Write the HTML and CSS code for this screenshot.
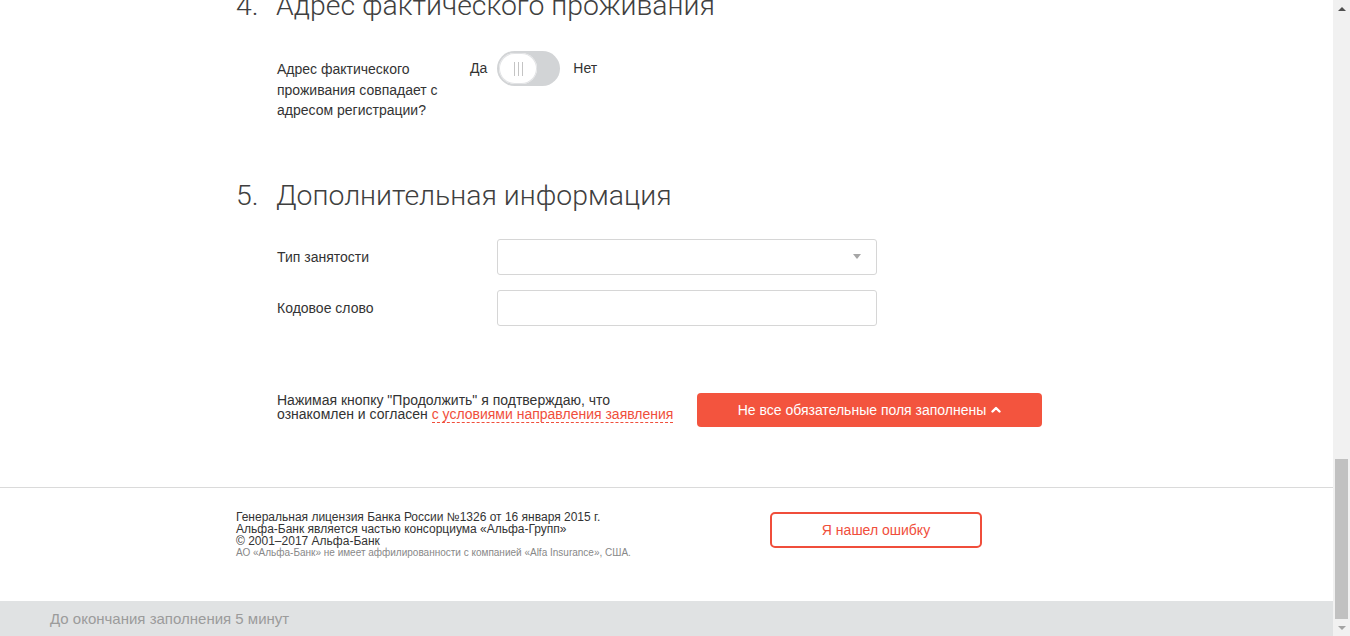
FILE: index.html
```html
<!DOCTYPE html>
<html lang="ru">
<head>
<meta charset="utf-8">
<title>Анкета</title>
<link rel="stylesheet" href="styles.css">
</head>
<body>
<div class="screen">
  <div class="main">
    <div class="page">
      <section class="section sec-address">
        <h2 class="sec-title"><span class="num">4.</span><span>Адрес фактического проживания</span></h2>
        <div class="row-toggle">
          <div class="label-multi">Адрес фактического проживания совпадает с адресом регистрации?</div>
          <div class="toggle-group">
            <span class="opt">Да</span>
            <span class="toggle"><span class="knob"><i></i><i></i><i></i></span></span>
            <span class="opt">Нет</span>
          </div>
        </div>
      </section>

      <section class="section sec-extra">
        <h2 class="sec-title"><span class="num">5.</span><span>Дополнительная информация</span></h2>
        <div class="fields">
          <div class="field-row">
            <div class="field-label">Тип занятости</div>
            <div class="field select"><span class="arrow"></span></div>
          </div>
          <div class="field-row">
            <div class="field-label">Кодовое слово</div>
            <div class="field"></div>
          </div>
        </div>
      </section>

      <div class="consent">
        <p class="consent-text">Нажимая кнопку "Продолжить" я подтверждаю, что ознакомлен и согласен <a class="dash-link">с условиями направления заявления</a></p>
        <button class="btn-primary">Не все обязательные поля заполнены
          <svg class="chev" width="10" height="7" viewBox="0 0 10 7"><polyline points="1.5,5.5 5,2 8.5,5.5" fill="none" stroke="#fff" stroke-width="2.4" stroke-linecap="round" stroke-linejoin="round"/></svg>
        </button>
      </div>
    </div>

    <footer class="footer">
      <div class="footer-inner">
        <div class="legal">
          <div>Генеральная лицензия Банка России №1326 от 16 января 2015 г.</div>
          <div>Альфа-Банк является частью консорциума «Альфа-Групп»</div>
          <div>© 2001–2017 Альфа-Банк</div>
          <div class="legal-small">АО «Альфа-Банк» не имеет аффилированности с компанией «Alfa Insurance», США.</div>
        </div>
        <button class="btn-outline">Я нашел ошибку</button>
      </div>
    </footer>

    <div class="timer-bar">До окончания заполнения 5 минут</div>
  </div>

  <div class="scrollbar">
    <div class="sb-btn"><span class="tri-up"></span></div>
    <div class="sb-track"><div class="sb-thumb"></div></div>
    <div class="sb-btn"><span class="tri-down"></span></div>
  </div>
</div>
</body>
</html>
```

FILE: styles.css
```css
html, body {
  margin: 0;
  padding: 0;
  height: 100%;
  overflow: hidden;
  background: #fff;
}

body {
  font-family: "Liberation Sans", Arial, sans-serif;
  color: #333;
  font-size: 14px;
}

.screen {
  display: flex;
  height: 636px;
  width: 1350px;
}

.main {
  flex: 1;
  display: flex;
  flex-direction: column;
  overflow: hidden;
  min-width: 0;
}

.page {
  padding-left: 236px;
}

.sec-address {
  margin-top: -12px;
}

.sec-extra {
  margin-top: 57px;
}

.sec-title {
  display: flex;
  margin: 0;
  font-family: Roboto, "Liberation Sans", sans-serif;
  font-weight: 300;
  font-size: 28.4px;
  line-height: 36px;
  color: #3f3f3f;
}

.sec-title .num {
  width: 40px;
  flex: none;
}

.row-toggle {
  display: flex;
  align-items: flex-start;
  margin-top: 27px;
  padding-left: 41px;
}

.label-multi {
  width: 193px;
  padding-top: 8px;
  line-height: 20.5px;
}

.toggle-group {
  display: flex;
  align-items: center;
  height: 35px;
}

.opt {
  line-height: 35px;
}

.toggle {
  width: 63px;
  height: 35px;
  border-radius: 18px;
  background: #d2d4d6;
  margin: 0 13px 0 10px;
  display: flex;
  align-items: center;
  padding-left: 2px;
  box-sizing: border-box;
}

.knob {
  width: 38px;
  height: 31px;
  border-radius: 16px;
  background: #fff;
  box-shadow: 0 0 0 1px #e2e3e5 inset;
  display: flex;
  align-items: center;
  justify-content: center;
  gap: 3px;
}

.knob i {
  display: block;
  width: 1px;
  height: 14px;
  background: #c4c4c4;
}

.fields {
  margin-top: 25px;
  padding-left: 41px;
  display: flex;
  flex-direction: column;
  gap: 15px;
}

.field-row {
  display: flex;
  align-items: center;
}

.field-label {
  width: 220px;
}

.field {
  width: 380px;
  height: 36px;
  box-sizing: border-box;
  border: 1px solid #d6d6d6;
  border-radius: 3px;
  background: #fff;
  display: flex;
  align-items: center;
  justify-content: flex-end;
  padding-right: 15px;
}

.arrow {
  width: 0;
  height: 0;
  border-left: 4px solid transparent;
  border-right: 4px solid transparent;
  border-top: 5px solid #a6a6a6;
}

.consent {
  display: flex;
  align-items: flex-start;
  margin-top: 67px;
  padding-left: 41px;
  gap: 20px;
}

.consent-text {
  width: 400px;
  margin: 0;
  line-height: 14px;
}

.dash-link {
  color: #f04e3b;
  border-bottom: 1px dashed #f04e3b;
  text-decoration: none;
}

.btn-primary {
  width: 345px;
  height: 34px;
  border: 0;
  border-radius: 4px;
  background: #f3543e;
  color: #fff;
  font-family: "Liberation Sans", Arial, sans-serif;
  font-size: 14px;
  display: flex;
  align-items: center;
  justify-content: center;
  gap: 5px;
  padding: 0;
}

.chev {
  display: block;
  margin-top: -1px;
}

.footer {
  margin-top: 60px;
  border-top: 1px solid #dadada;
  padding: 23px 0 0 236px;
}

.footer-inner {
  display: flex;
  align-items: flex-start;
}

.legal {
  width: 534px;
  font-size: 12px;
  line-height: 12px;
  color: #333;
}

.legal-small {
  font-size: 10px;
  color: #888;
}

.btn-outline {
  width: 212px;
  height: 36px;
  margin-top: 1px;
  box-sizing: border-box;
  border: 2px solid #f04e3b;
  border-radius: 5px;
  background: #fff;
  color: #f04e3b;
  font-family: "Liberation Sans", Arial, sans-serif;
  font-size: 14px;
  padding: 0;
}

.timer-bar {
  margin-top: auto;
  height: 35px;
  flex: none;
  background: #e0e2e3;
  color: #9b9b9b;
  font-size: 15px;
  line-height: 35px;
  padding-left: 50px;
}

.scrollbar {
  width: 17px;
  flex: none;
  background: #f1f1f1;
  display: flex;
  flex-direction: column;
}

.sb-btn {
  height: 17px;
  flex: none;
  display: flex;
  align-items: center;
  justify-content: center;
}

.tri-up {
  width: 0;
  height: 0;
  border-left: 4px solid transparent;
  border-right: 4px solid transparent;
  border-bottom: 4px solid #505050;
}

.tri-down {
  width: 0;
  height: 0;
  border-left: 4px solid transparent;
  border-right: 4px solid transparent;
  border-top: 4px solid #a3a3a3;
}

.sb-track {
  flex: 1;
  display: flex;
  flex-direction: column;
}

.sb-thumb {
  margin: auto 2px 0 2px;
  height: 160px;
  background: #c1c1c1;
}
```
